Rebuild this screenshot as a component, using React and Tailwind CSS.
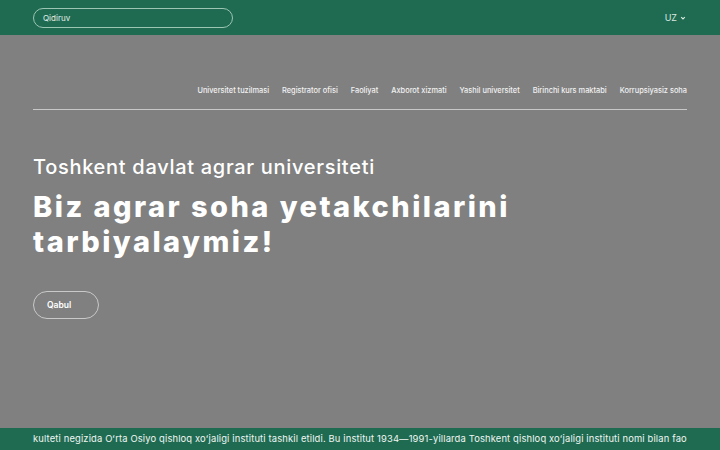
const navItems = [
  'Universitet tuzilmasi',
  'Registrator ofisi',
  'Faoliyat',
  'Axborot xizmati',
  'Yashil universitet',
  'Birinchi kurs maktabi',
  'Korrupsiyasiz soha',
];

export default function App() {
  return (
    <div className="w-[720px] h-[450px] flex flex-col bg-[#808080] overflow-hidden font-['Inter','Liberation_Sans',sans-serif] text-white">
      {/* top bar */}
      <div className="h-[35px] shrink-0 bg-[#1f6b51] flex items-center justify-between pl-[33px] pr-[34px]">
        <div className="w-[200px] h-[20px] rounded-full border border-[#9cc5b4] flex items-center pl-[9px]">
          <span className="text-[8px] text-[#e3efe9]">Qidiruv</span>
        </div>
        <div className="flex items-center gap-[3px] text-[9px] text-[#dbe9e2]">
          <span>UZ</span>
          <svg width="6" height="6" viewBox="0 0 10 10" fill="none" stroke="currentColor" strokeWidth="2">
            <path d="M2 3.5 L5 6.5 L8 3.5" />
          </svg>
        </div>
      </div>

      {/* hero */}
      <div className="flex-1 flex flex-col px-[33px]">
        <div className="flex justify-end gap-[13px] pt-[50px] pb-[13px] border-b border-[#c8c8c8] text-[7.4px] font-medium text-[#f2f2f2]">
          {navItems.map((item) => (
            <span key={item}>{item}</span>
          ))}
        </div>

        <div className="mt-[44px] text-[20px] font-medium leading-[26px] tracking-[0.7px]">
          Toshkent davlat agrar universiteti
        </div>
        <h1 className="mt-[9px] text-[29px] font-extrabold leading-[35px] tracking-[2.45px] w-[560px]">
          Biz agrar soha yetakchilarini tarbiyalaymiz!
        </h1>

        <button className="mt-[32px] w-[66px] h-[28px] rounded-full border border-[#c9c9c9] flex items-center pl-[13px] text-[8.5px] font-semibold text-white">
          Qabul
        </button>
      </div>

      {/* ticker */}
      <div className="h-[22px] shrink-0 bg-[#1f6b51] flex items-center pl-[33px] whitespace-nowrap overflow-hidden">
        <span className="text-[9.4px] tracking-[0.15px] text-[#f0f6f3]">
          kulteti negizida Oʻrta Osiyo qishloq xoʻjaligi instituti tashkil etildi. Bu institut 1934—1991-yillarda Toshkent qishloq xoʻjaligi instituti nomi bilan fao
        </span>
      </div>
    </div>
  );
}
